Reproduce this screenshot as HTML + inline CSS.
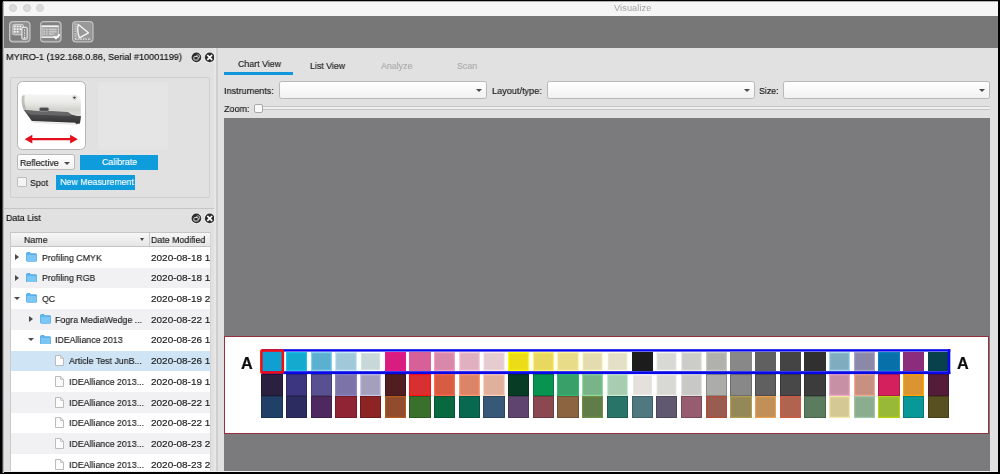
<!DOCTYPE html>
<html><head><meta charset="utf-8"><title>Visualize</title>
<style>
*{box-sizing:border-box;margin:0;padding:0}
html,body{width:1000px;height:474px;overflow:hidden;background:#000}
body{position:relative;font-family:"Liberation Sans",sans-serif;font-size:9px;color:#1a1a1a;-webkit-font-smoothing:antialiased}
.abs,body>div,body>span,body>i,body>svg{position:absolute}
i{display:block;font-style:normal}
#edgeL{left:2px;top:1.5px;width:2px;height:471px;background:linear-gradient(to right,#4a4a4a 0,#4a4a4a 50%,#b8b8b8 50%,#b8b8b8 100%)}
#win{left:3.5px;top:1.5px;width:994.5px;height:470.5px;background:#e1e1e2;overflow:hidden}
#title{left:0;top:0;width:994px;height:14.2px;background:#f6f5f6;position:absolute}
#title span{position:absolute;left:610.5px;top:1.6px;font-size:9.2px;color:#a3a3a3;letter-spacing:0.1px}
.tl{position:absolute;top:2.4px;width:8.4px;height:8.4px;border-radius:50%;background:#dcdbdc;border:0.6px solid #d0cfd0}
#tool{position:absolute;left:0;top:14.2px;width:994px;height:32.3px;background:#777777}
.ti{position:absolute;top:5.3px}
.lbl{position:absolute;white-space:nowrap;line-height:11px}
.lbl,.tr span{will-change:transform;font-size:9.8px;transform:scaleX(0.9);transform-origin:0 50%;-webkit-text-stroke:0.18px currentColor}
.tr span.td{transform:scaleX(1.018)}
.btn span{display:inline-block;will-change:transform;font-size:9.8px;transform:scaleX(0.895);-webkit-text-stroke:0.15px currentColor}
#title span{will-change:transform}
.p{position:absolute}
.big{position:absolute;font-size:16.2px;line-height:17px;font-weight:bold;color:#0c0c0c;will-change:transform;-webkit-text-stroke:0.2px #0c0c0c}
/* left dock */
#dock1{position:absolute;left:0;top:46px;width:212.5px;height:160px;background:#e1e1e2}
.gb{position:absolute;border:1px solid #cfcfcf;border-radius:2px}
.circ{position:absolute;width:9.6px;height:9.6px;border-radius:50%;background:#3a3a3a}
.btn{position:absolute;background:#0f9cdc;color:#fff;text-align:center;white-space:nowrap}
.combo{position:absolute;background:linear-gradient(#ffffff,#f1f1f1);border:1px solid #b8b8b8;border-radius:2.5px}
.combo:after{content:"";position:absolute;right:4.2px;top:6.5px;border:3px solid transparent;border-top:3.6px solid #4a4a4a;border-bottom:0}
/* tree */
#tree{position:absolute;left:6.5px;top:230.5px;width:201px;height:240px;background:#fff;overflow:hidden;border-left:1px solid #c9c9c9;border-right:1px solid #d4d4d4}
#th{position:absolute;left:0;top:0;width:201px;height:15px;background:linear-gradient(#f7f7f7,#e6e6e6);border-top:1px solid #c6c6c6;border-bottom:1px solid #c4c4c4}
#rows{position:absolute;left:-1px;top:15px;width:201px;height:230px}
.tr{position:absolute;left:0;width:201px;height:20.8px}
.tr span{position:absolute;top:4.7px;line-height:11px;white-space:nowrap;color:#222}
.td{left:141px}
.fo{position:absolute;top:4.9px}.do{position:absolute;top:4.8px}
.ac{position:absolute;top:7.1px;border:3.1px solid transparent;border-left:4.3px solid #4a4a4a;border-right:0}
.ao{position:absolute;top:8.7px;border:3.1px solid transparent;border-top:3.8px solid #4a4a4a;border-bottom:0}
</style></head><body>
<i id="edgeL"></i>
<i class="abs" style="left:3px;top:1px;width:995px;height:1px;background:#b2b1b2"></i>
<div id="win">
 <div id="title"><i class="tl" style="left:5.3px"></i><i class="tl" style="left:19.1px"></i><i class="tl" style="left:32.6px"></i><span>Visualize</span></div>
 <div id="tool">
  <svg class="ti" style="left:5.8px" width="21.6" height="21.6" viewBox="0 0 21.6 21.6">
   <rect x="0.65" y="0.65" width="20.3" height="20.3" rx="3.4" fill="#8f8f8f" stroke="#c3c3c3" stroke-width="1.3"/>
   <rect x="2" y="14.2" width="10.4" height="4.9" fill="#7e7e7e"/>
   <rect x="3.9" y="3.4" width="10.6" height="10.4" rx="1.4" fill="#a6a6a6" stroke="#d4d4d4" stroke-width="1"/>
   <g fill="#fbfbfb"><rect x="4.9" y="4.6" width="1.8" height="1.6"/><rect x="7.7" y="4.6" width="1.8" height="1.6"/><rect x="10.5" y="4.6" width="1.8" height="1.6"/><rect x="4.9" y="7.3" width="1.8" height="1.6"/><rect x="7.7" y="7.3" width="1.8" height="1.6"/><rect x="10.5" y="7.3" width="1.8" height="1.6"/><rect x="4.9" y="10" width="1.8" height="1.6"/><rect x="7.7" y="10" width="1.8" height="1.6"/></g>
   <rect x="12.9" y="6.4" width="5.3" height="11.8" rx="1.5" fill="#8b8b8b" stroke="#e6e6e6" stroke-width="1.2"/>
   <path d="M15.55 8.2 L15.55 15.2" stroke="#dcdcdc" stroke-width="0.9" stroke-dasharray="2.2 0.8"/>
   <rect x="14.9" y="15.9" width="1.4" height="1.3" fill="#fff"/>
  </svg>
  <svg class="ti" style="left:36.9px" width="21.6" height="21.6" viewBox="0 0 21.6 21.6">
   <rect x="0.65" y="0.65" width="20.3" height="20.3" rx="3.4" fill="#8f8f8f" stroke="#c3c3c3" stroke-width="1.3"/>
   <rect x="1.6" y="1.7" width="17.2" height="2.9" fill="#808080"/>
   <rect x="1.6" y="16.8" width="17.2" height="2.6" fill="#858585"/>
   <rect x="1.7" y="5.1" width="16.8" height="11" fill="#a4a4a4"/>
   <rect x="1.5" y="4.4" width="17.2" height="1.5" fill="#fcfcfc"/>
   <rect x="1.5" y="15.5" width="17.2" height="1.4" fill="#f4f4f4"/>
   <rect x="18" y="5" width="0.9" height="11" fill="#cfcfcf"/>
   <rect x="1.5" y="5" width="0.9" height="11" fill="#cfcfcf"/>
   <g fill="#c9c9c9"><rect x="3.2" y="7.7" width="1.8" height="1.5"/><rect x="5.9" y="7.7" width="1.8" height="1.5"/><rect x="8.9" y="7.7" width="7.6" height="1.5"/>
   <rect x="3.2" y="10" width="1.8" height="1.5"/><rect x="5.9" y="10" width="1.8" height="1.5"/><rect x="8.9" y="10" width="7.6" height="1.5"/>
   <rect x="3.2" y="12.3" width="1.8" height="1.5"/><rect x="5.9" y="12.3" width="1.8" height="1.5"/><rect x="8.9" y="12.3" width="5" height="1.5"/></g>
   <path d="M14 15.3 L15.9 17.4 L19.8 13.4" fill="none" stroke="#ffffff" stroke-width="1.7"/>
  </svg>
  <svg class="ti" style="left:68.5px" width="21.6" height="21.6" viewBox="0 0 21.6 21.6">
   <rect x="0.65" y="0.65" width="20.3" height="20.3" rx="3.4" fill="#8f8f8f" stroke="#c3c3c3" stroke-width="1.3"/>
   <rect x="3.6" y="2" width="15.6" height="15.8" fill="#999999"/>
   <path d="M3.1 2.4 L3.1 18" stroke="#ececec" stroke-width="0.95" stroke-dasharray="1.5 0.9"/>
   <path d="M3 18.2 L19 18.2" stroke="#e8e8e8" stroke-width="1.2" stroke-dasharray="1.7 0.9"/>
   <path d="M4.7 2.2 L4.7 17" stroke="#bdbdbd" stroke-width="0.8"/>
   <path d="M6.3 3.4 L16.4 11.8 L7.6 16.9 Q4.6 10 6.3 3.4 Z" fill="none" stroke="#f4f4f4" stroke-width="1.35" stroke-linejoin="round"/>
  </svg>
 </div>

 <!-- left dock 1 -->
 <span class="lbl" style="left:2.8px;top:49.8px;color:#111;transform:scaleX(0.932)">MYIRO-1 (192.168.0.86, Serial #10001199)</span>
 <svg class="abs" style="left:186.4px;top:49.3px" width="26.2" height="12.8" viewBox="0 0 26.2 12.8">
  <circle cx="6.4" cy="6.4" r="5.9" fill="#f0f0f0" opacity="0.75"/><circle cx="19.7" cy="6.4" r="5.9" fill="#f0f0f0" opacity="0.75"/>
  <circle cx="6.4" cy="6.4" r="4.85" fill="#2e2e2e"/><circle cx="19.7" cy="6.4" r="4.85" fill="#2e2e2e"/>
  <rect x="6.6" y="4" width="3" height="3" rx="0.6" fill="none" stroke="#bdbdbd" stroke-width="0.9"/>
  <rect x="3.9" y="5.5" width="4.2" height="3.5" rx="0.8" fill="#2e2e2e" stroke="#dadada" stroke-width="1"/>
  <path d="M17.3 4 L22.1 8.8 M22.1 4 L17.3 8.8" stroke="#ffffff" stroke-width="1.75"/>
 </svg>
 <div class="gb" style="left:6.6px;top:75.4px;width:200px;height:121px"></div>
 <i class="abs" style="left:94.5px;top:80.5px;width:70px;height:67.5px;background:#e5e5e6"></i>
 <div class="abs" style="left:13.2px;top:79.3px;width:69px;height:68.8px;background:#fff;border:1px solid #b4b4b4;border-radius:5.5px"></div>
 <svg class="abs" style="left:13.2px;top:79.5px" width="69" height="68.8" viewBox="16.7 81 69 68.8">
  <defs><linearGradient id="dv" x1="0" y1="0" x2="0" y2="1"><stop offset="0" stop-color="#f6f6f4"/><stop offset="0.35" stop-color="#ecece9"/><stop offset="0.7" stop-color="#d2d2ce"/><stop offset="1" stop-color="#dededa"/></linearGradient>
  <linearGradient id="dk" x1="0" y1="0" x2="0" y2="1"><stop offset="0" stop-color="#5a5a5c"/><stop offset="1" stop-color="#303032"/></linearGradient></defs>
  <path d="M30 121.6 L76 123.4 L79 125 L34 123 Z" fill="#e6e6e6"/>
  <path d="M23.2 109.4 L39 110.5 L48.6 110.7 L66 111.4 Q68.5 111.7 71 114 Q74 115.3 80.6 115.7 L80.4 119 L79.6 123.6 L75.6 124 L75.2 122.8 L31.5 121.1 Z" fill="url(#dk)"/>
  <path d="M24 110 L66 111.9 Q68 112.2 70 114 L70 116 L30 114.6 Z" fill="#707072" opacity="0.7"/>
  <path d="M21.9 94.2 L75 94.8 Q80.4 95.1 80.5 100.5 L80.6 116.1 Q74 115.7 71 114.4 Q68.5 112.1 66 111.8 L48.6 111.1 L39 110.9 L23.2 109.8 Q20.7 105 21.2 100 Z" fill="url(#dv)"/>
  <path d="M21.6 96 Q20.6 104 23.4 109.6 L26 109.8 Q23.4 103 24.4 95 Z" fill="#9c9c98" opacity="0.55"/>
  <rect x="39" y="107.5" width="9.6" height="3.8" rx="1.7" fill="#4a4a4c" stroke="#a4a4a2" stroke-width="0.7"/>
  <circle cx="74.2" cy="97.6" r="1.2" fill="#3c3c3a"/><circle cx="74.2" cy="97.6" r="2.1" fill="none" stroke="#cacac6" stroke-width="0.6"/>
  <path d="M30.5 139.2 L71.5 139.2" stroke="#e5101e" stroke-width="2.2"/>
  <path d="M24.3 139.2 L32 134.8 L32 143.6 Z M77.5 139.2 L69.8 134.8 L69.8 143.6 Z" fill="#e5101e"/>
 </svg>
 <div class="combo" style="left:13px;top:152.6px;width:58.8px;height:15.8px"><span class="lbl" style="left:2px;top:1.6px">Reflective</span></div>
 <div class="btn" style="left:76.4px;top:153.3px;width:78.6px;height:14.8px;line-height:14.6px"><span>Calibrate</span></div>
 <i class="abs" style="left:13.5px;top:175.6px;width:9.6px;height:9.8px;background:#f4f4f4;border:1px solid #bdbdbd;border-radius:1px"></i>
 <span class="lbl" style="left:26.6px;top:175.6px">Spot</span>
 <div class="btn" style="left:52.6px;top:173.2px;width:78.8px;height:15px;line-height:14.8px;padding-right:2.6px"><span>New Measurement</span></div>
 <i class="abs" style="left:0;top:206.4px;width:210.5px;height:1px;background:#c6c6c6"></i>

 <!-- data list -->
 <span class="lbl" style="left:2.8px;top:210.4px;color:#111">Data List</span>
 <svg class="abs" style="left:186.4px;top:210px" width="26.2" height="12.8" viewBox="0 0 26.2 12.8">
  <circle cx="6.4" cy="6.4" r="5.9" fill="#f0f0f0" opacity="0.75"/><circle cx="19.7" cy="6.4" r="5.9" fill="#f0f0f0" opacity="0.75"/>
  <circle cx="6.4" cy="6.4" r="4.85" fill="#2e2e2e"/><circle cx="19.7" cy="6.4" r="4.85" fill="#2e2e2e"/>
  <rect x="6.6" y="4" width="3" height="3" rx="0.6" fill="none" stroke="#bdbdbd" stroke-width="0.9"/>
  <rect x="3.9" y="5.5" width="4.2" height="3.5" rx="0.8" fill="#2e2e2e" stroke="#dadada" stroke-width="1"/>
  <path d="M17.3 4 L22.1 8.8 M22.1 4 L17.3 8.8" stroke="#ffffff" stroke-width="1.75"/>
 </svg>
 <div id="tree">
  <div id="th"><span class="lbl" style="left:12.5px;top:1.2px">Name</span><i class="abs" style="left:129.2px;top:5.2px;border:2.7px solid transparent;border-top:3.2px solid #444;border-bottom:0"></i><i class="abs" style="left:138px;top:0;width:1px;height:13px;background:#c8c8c8"></i><span class="lbl" style="left:139.6px;top:1.2px">Date Modified</span></div>
  <div id="rows">
<div class="tr" style="top:0.00px;background:#ffffff"><i class="ac" style="left:4.5px"></i><svg class="fo" style="left:16.3px" width="11.2" height="9.7" viewBox="0 0 12 11" preserveAspectRatio="none"><path d="M0.5 1.6 Q0.5 0.6 1.5 0.6 L4.2 0.6 L5.4 2 L10.6 2 Q11.5 2 11.5 3 L11.5 9.6 Q11.5 10.5 10.6 10.5 L1.4 10.5 Q0.5 10.5 0.5 9.6 Z" fill="#5db5ee" stroke="#3d9ee0" stroke-width="0.8"/><path d="M0.9 3.4 L11.1 3.4 L11.1 9.6 Q11.1 10.1 10.6 10.1 L1.4 10.1 Q0.9 10.1 0.9 9.6 Z" fill="#7cc6f5"/></svg><span class="tn" style="left:31.8px">Profiling CMYK</span><span class="td">2020-08-18 1</span></div>
<div class="tr" style="top:20.70px;background:#f1f1f3"><i class="ac" style="left:4.5px"></i><svg class="fo" style="left:16.3px" width="11.2" height="9.7" viewBox="0 0 12 11" preserveAspectRatio="none"><path d="M0.5 1.6 Q0.5 0.6 1.5 0.6 L4.2 0.6 L5.4 2 L10.6 2 Q11.5 2 11.5 3 L11.5 9.6 Q11.5 10.5 10.6 10.5 L1.4 10.5 Q0.5 10.5 0.5 9.6 Z" fill="#5db5ee" stroke="#3d9ee0" stroke-width="0.8"/><path d="M0.9 3.4 L11.1 3.4 L11.1 9.6 Q11.1 10.1 10.6 10.1 L1.4 10.1 Q0.9 10.1 0.9 9.6 Z" fill="#7cc6f5"/></svg><span class="tn" style="left:31.8px">Profiling RGB</span><span class="td">2020-08-18 1</span></div>
<div class="tr" style="top:41.40px;background:#ffffff"><i class="ao" style="left:3.6px"></i><svg class="fo" style="left:16.3px" width="11.2" height="9.7" viewBox="0 0 12 11" preserveAspectRatio="none"><path d="M0.5 1.6 Q0.5 0.6 1.5 0.6 L4.2 0.6 L5.4 2 L10.6 2 Q11.5 2 11.5 3 L11.5 9.6 Q11.5 10.5 10.6 10.5 L1.4 10.5 Q0.5 10.5 0.5 9.6 Z" fill="#5db5ee" stroke="#3d9ee0" stroke-width="0.8"/><path d="M0.9 3.4 L11.1 3.4 L11.1 9.6 Q11.1 10.1 10.6 10.1 L1.4 10.1 Q0.9 10.1 0.9 9.6 Z" fill="#7cc6f5"/></svg><span class="tn" style="left:31.8px">QC</span><span class="td">2020-08-19 2</span></div>
<div class="tr" style="top:62.10px;background:#f1f1f3"><i class="ac" style="left:18.7px"></i><svg class="fo" style="left:30.2px" width="11.2" height="9.7" viewBox="0 0 12 11" preserveAspectRatio="none"><path d="M0.5 1.6 Q0.5 0.6 1.5 0.6 L4.2 0.6 L5.4 2 L10.6 2 Q11.5 2 11.5 3 L11.5 9.6 Q11.5 10.5 10.6 10.5 L1.4 10.5 Q0.5 10.5 0.5 9.6 Z" fill="#5db5ee" stroke="#3d9ee0" stroke-width="0.8"/><path d="M0.9 3.4 L11.1 3.4 L11.1 9.6 Q11.1 10.1 10.6 10.1 L1.4 10.1 Q0.9 10.1 0.9 9.6 Z" fill="#7cc6f5"/></svg><span class="tn" style="left:45.4px">Fogra MediaWedge ...</span><span class="td">2020-08-22 1</span></div>
<div class="tr" style="top:82.80px;background:#ffffff"><i class="ao" style="left:17.8px"></i><svg class="fo" style="left:30.2px" width="11.2" height="9.7" viewBox="0 0 12 11" preserveAspectRatio="none"><path d="M0.5 1.6 Q0.5 0.6 1.5 0.6 L4.2 0.6 L5.4 2 L10.6 2 Q11.5 2 11.5 3 L11.5 9.6 Q11.5 10.5 10.6 10.5 L1.4 10.5 Q0.5 10.5 0.5 9.6 Z" fill="#5db5ee" stroke="#3d9ee0" stroke-width="0.8"/><path d="M0.9 3.4 L11.1 3.4 L11.1 9.6 Q11.1 10.1 10.6 10.1 L1.4 10.1 Q0.9 10.1 0.9 9.6 Z" fill="#7cc6f5"/></svg><span class="tn" style="left:45.4px">IDEAlliance 2013</span><span class="td">2020-08-26 1</span></div>
<div class="tr" style="top:103.50px;background:#cfe5f5"><svg class="do" style="left:45.3px" width="9" height="11" viewBox="0 0 9 11"><path d="M0.5 0.5 L5.6 0.5 L8.5 3.4 L8.5 10.5 L0.5 10.5 Z" fill="#fdfdfd" stroke="#b4b4b4" stroke-width="0.9"/><path d="M5.6 0.5 L5.6 3.4 L8.5 3.4" fill="none" stroke="#b4b4b4" stroke-width="0.8"/></svg><span class="tn" style="left:59.3px">Article Test JunB...</span><span class="td">2020-08-26 1</span></div>
<div class="tr" style="top:124.20px;background:#ffffff"><svg class="do" style="left:45.3px" width="9" height="11" viewBox="0 0 9 11"><path d="M0.5 0.5 L5.6 0.5 L8.5 3.4 L8.5 10.5 L0.5 10.5 Z" fill="#fdfdfd" stroke="#b4b4b4" stroke-width="0.9"/><path d="M5.6 0.5 L5.6 3.4 L8.5 3.4" fill="none" stroke="#b4b4b4" stroke-width="0.8"/></svg><span class="tn" style="left:59.3px">IDEAlliance 2013...</span><span class="td">2020-08-19 1</span></div>
<div class="tr" style="top:144.90px;background:#f1f1f3"><svg class="do" style="left:45.3px" width="9" height="11" viewBox="0 0 9 11"><path d="M0.5 0.5 L5.6 0.5 L8.5 3.4 L8.5 10.5 L0.5 10.5 Z" fill="#fdfdfd" stroke="#b4b4b4" stroke-width="0.9"/><path d="M5.6 0.5 L5.6 3.4 L8.5 3.4" fill="none" stroke="#b4b4b4" stroke-width="0.8"/></svg><span class="tn" style="left:59.3px">IDEAlliance 2013...</span><span class="td">2020-08-22 1</span></div>
<div class="tr" style="top:165.60px;background:#ffffff"><svg class="do" style="left:45.3px" width="9" height="11" viewBox="0 0 9 11"><path d="M0.5 0.5 L5.6 0.5 L8.5 3.4 L8.5 10.5 L0.5 10.5 Z" fill="#fdfdfd" stroke="#b4b4b4" stroke-width="0.9"/><path d="M5.6 0.5 L5.6 3.4 L8.5 3.4" fill="none" stroke="#b4b4b4" stroke-width="0.8"/></svg><span class="tn" style="left:59.3px">IDEAlliance 2013...</span><span class="td">2020-08-22 1</span></div>
<div class="tr" style="top:186.30px;background:#f1f1f3"><svg class="do" style="left:45.3px" width="9" height="11" viewBox="0 0 9 11"><path d="M0.5 0.5 L5.6 0.5 L8.5 3.4 L8.5 10.5 L0.5 10.5 Z" fill="#fdfdfd" stroke="#b4b4b4" stroke-width="0.9"/><path d="M5.6 0.5 L5.6 3.4 L8.5 3.4" fill="none" stroke="#b4b4b4" stroke-width="0.8"/></svg><span class="tn" style="left:59.3px">IDEAlliance 2013...</span><span class="td">2020-08-23 2</span></div>
<div class="tr" style="top:207.00px;background:#ffffff"><svg class="do" style="left:45.3px" width="9" height="11" viewBox="0 0 9 11"><path d="M0.5 0.5 L5.6 0.5 L8.5 3.4 L8.5 10.5 L0.5 10.5 Z" fill="#fdfdfd" stroke="#b4b4b4" stroke-width="0.9"/><path d="M5.6 0.5 L5.6 3.4 L8.5 3.4" fill="none" stroke="#b4b4b4" stroke-width="0.8"/></svg><span class="tn" style="left:59.3px">IDEAlliance 2013...</span><span class="td">2020-08-23 2</span></div>
  </div>
 </div>

 <!-- splitter -->
 <i class="abs" style="left:210.5px;top:46px;width:2px;height:425px;background:#e7e7e8"></i>
 <i class="abs" style="left:212.5px;top:46px;width:2px;height:425px;background:#cfcfd0"></i>

 <!-- right panel -->
 <span class="lbl" style="left:234.7px;top:56.6px;color:#222">Chart View</span>
 <i class="abs" style="left:220.5px;top:70.5px;width:69.2px;height:2.8px;background:#1297dc"></i>
 <span class="lbl" style="left:306.5px;top:58.6px;color:#222">List View</span>
 <span class="lbl" style="left:377.3px;top:58.6px;color:#ababab">Analyze</span>
 <span class="lbl" style="left:453.3px;top:58.6px;color:#ababab">Scan</span>

 <span class="lbl" style="left:220.8px;top:83.4px;transform:scaleX(0.925)">Instruments:</span>
 <div class="combo" style="left:275.7px;top:79.8px;width:207.8px;height:17.6px"></div>
 <span class="lbl" style="left:488.5px;top:83.4px;transform:scaleX(0.932)">Layout/type:</span>
 <div class="combo" style="left:543.7px;top:79.8px;width:207.8px;height:17.6px"></div>
 <span class="lbl" style="left:755.7px;top:83.4px">Size:</span>
 <div class="combo" style="left:779.3px;top:79.8px;width:207.6px;height:17.6px"></div>
 <span class="lbl" style="left:220.8px;top:101.6px;transform:scaleX(0.915)">Zoom:</span>
 <i class="abs" style="left:256px;top:104.8px;width:731px;height:3.4px;background:#f0f0f0;border:1px solid #c6c6c6;border-radius:1.7px"></i>
 <i class="abs" style="left:250.8px;top:102.2px;width:9.2px;height:9.4px;background:#fafafa;border:1px solid #a8a8a8;border-radius:2px"></i>

 <div class="abs" style="left:220.5px;top:116.5px;width:766.5px;height:353px;background:#7b7b7d"></div>
 <div class="abs" style="left:220.5px;top:334.5px;width:765px;height:97.5px;background:#fff;border:1px solid #96303f"></div>
 <i class="abs" style="left:986.8px;top:46px;width:8px;height:425px;background:#e1e1e2"></i>
 <i class="abs" style="left:0;top:469.5px;width:994px;height:1px;background:#efefef"></i>
</div>

<!-- chart contents in page coordinates -->
<span class="big" style="left:241.2px;top:355.4px">A</span>
<span class="big" style="left:956.8px;top:355.4px">A</span>
<i class="p" style="left:261.30px;top:351.6px;width:21.3px;height:19.8px;background:#0f9fd0;"></i>
<i class="p" style="left:285.98px;top:351.6px;width:21.3px;height:19.8px;background:#14a9cf;box-shadow:inset 0 0 0 1.2px #1cc0ec;"></i>
<i class="p" style="left:310.66px;top:351.6px;width:21.3px;height:19.8px;background:#5cb0cf;box-shadow:inset 0 0 0 1.2px #84d0f0;"></i>
<i class="p" style="left:335.34px;top:351.6px;width:21.3px;height:19.8px;background:#a0c8d8;box-shadow:inset 0 0 0 1.2px #c4e8f8;"></i>
<i class="p" style="left:360.02px;top:351.6px;width:21.3px;height:19.8px;background:#c8d8d8;box-shadow:inset 0 0 0 1.2px #f4fcfc;"></i>
<i class="p" style="left:384.70px;top:351.6px;width:21.3px;height:19.8px;background:#d81c80;box-shadow:inset 0 0 0 1.2px #e81890;"></i>
<i class="p" style="left:409.38px;top:351.6px;width:21.3px;height:19.8px;background:#d86098;"></i>
<i class="p" style="left:434.06px;top:351.6px;width:21.3px;height:19.8px;background:#d888a8;box-shadow:inset 0 0 0 1.2px #f0a0c0;"></i>
<i class="p" style="left:458.74px;top:351.6px;width:21.3px;height:19.8px;background:#e0b0c0;box-shadow:inset 0 0 0 1.2px #f4d0dc;"></i>
<i class="p" style="left:483.42px;top:351.6px;width:21.3px;height:19.8px;background:#e4ccd0;box-shadow:inset 0 0 0 1.2px #fce8ec;"></i>
<i class="p" style="left:508.10px;top:351.6px;width:21.3px;height:19.8px;background:#ecdc18;box-shadow:inset 0 0 0 1.2px #ffff00;"></i>
<i class="p" style="left:532.78px;top:351.6px;width:21.3px;height:19.8px;background:#e8d860;box-shadow:inset 0 0 0 1.2px #fff070;"></i>
<i class="p" style="left:557.46px;top:351.6px;width:21.3px;height:19.8px;background:#e8dc88;box-shadow:inset 0 0 0 1.2px #fff4a0;"></i>
<i class="p" style="left:582.14px;top:351.6px;width:21.3px;height:19.8px;background:#e4dcb0;box-shadow:inset 0 0 0 1.2px #fffac8;"></i>
<i class="p" style="left:606.82px;top:351.6px;width:21.3px;height:19.8px;background:#e4e0c8;box-shadow:inset 0 0 0 1.2px #fffce0;"></i>
<i class="p" style="left:631.50px;top:351.6px;width:21.3px;height:19.8px;background:#1c1c1c;"></i>
<i class="p" style="left:656.18px;top:351.6px;width:21.3px;height:19.8px;background:#d8d8d4;box-shadow:inset 0 0 0 1.2px #f4f4f0;"></i>
<i class="p" style="left:680.86px;top:351.6px;width:21.3px;height:19.8px;background:#ccccc8;box-shadow:inset 0 0 0 1.2px #e8e8e0;"></i>
<i class="p" style="left:705.54px;top:351.6px;width:21.3px;height:19.8px;background:#b0b0ac;box-shadow:inset 0 0 0 1.2px #c8c8c0;"></i>
<i class="p" style="left:730.22px;top:351.6px;width:21.3px;height:19.8px;background:#888888;"></i>
<i class="p" style="left:754.90px;top:351.6px;width:21.3px;height:19.8px;background:#606060;"></i>
<i class="p" style="left:779.58px;top:351.6px;width:21.3px;height:19.8px;background:#444444;"></i>
<i class="p" style="left:804.26px;top:351.6px;width:21.3px;height:19.8px;background:#303030;"></i>
<i class="p" style="left:828.94px;top:351.6px;width:21.3px;height:19.8px;background:#80acc0;box-shadow:inset 0 0 0 1.2px #a8d8ec;"></i>
<i class="p" style="left:853.62px;top:351.6px;width:21.3px;height:19.8px;background:#8c88a8;box-shadow:inset 0 0 0 1.2px #a8a4c4;"></i>
<i class="p" style="left:878.30px;top:351.6px;width:21.3px;height:19.8px;background:#0870a8;box-shadow:inset 0 0 0 1.2px #0880c0;"></i>
<i class="p" style="left:902.98px;top:351.6px;width:21.3px;height:19.8px;background:#8c2c7c;"></i>
<i class="p" style="left:927.66px;top:351.6px;width:21.3px;height:19.8px;background:#08404c;"></i>
<i class="p" style="left:261.30px;top:373.6px;width:21.3px;height:22.2px;background:#2a2040;box-shadow:inset 0 0 0 1px rgba(0,0,0,0.2);"></i>
<i class="p" style="left:285.98px;top:373.6px;width:21.3px;height:22.2px;background:#3c3680;box-shadow:inset 0 0 0 1px rgba(0,0,0,0.2);"></i>
<i class="p" style="left:310.66px;top:373.6px;width:21.3px;height:22.2px;background:#585090;box-shadow:inset 0 0 0 1px rgba(0,0,0,0.2);"></i>
<i class="p" style="left:335.34px;top:373.6px;width:21.3px;height:22.2px;background:#7c74a8;box-shadow:inset 0 0 0 1.2px #8c84c0;"></i>
<i class="p" style="left:360.02px;top:373.6px;width:21.3px;height:22.2px;background:#a4a0bc;box-shadow:inset 0 0 0 1.2px #c8c4e8;"></i>
<i class="p" style="left:384.70px;top:373.6px;width:21.3px;height:22.2px;background:#501e20;box-shadow:inset 0 0 0 1px rgba(0,0,0,0.2);"></i>
<i class="p" style="left:409.38px;top:373.6px;width:21.3px;height:22.2px;background:#d83030;box-shadow:inset 0 0 0 1.2px #ff1010;"></i>
<i class="p" style="left:434.06px;top:373.6px;width:21.3px;height:22.2px;background:#d85c44;box-shadow:inset 0 0 0 1.2px #ff6848;"></i>
<i class="p" style="left:458.74px;top:373.6px;width:21.3px;height:22.2px;background:#dc8468;box-shadow:inset 0 0 0 1.2px #ff9c78;"></i>
<i class="p" style="left:483.42px;top:373.6px;width:21.3px;height:22.2px;background:#e0b09c;box-shadow:inset 0 0 0 1.2px #ffd0b8;"></i>
<i class="p" style="left:508.10px;top:373.6px;width:21.3px;height:22.2px;background:#083c24;box-shadow:inset 0 0 0 1px rgba(0,0,0,0.2);"></i>
<i class="p" style="left:532.78px;top:373.6px;width:21.3px;height:22.2px;background:#089450;box-shadow:inset 0 0 0 1px rgba(0,0,0,0.2);"></i>
<i class="p" style="left:557.46px;top:373.6px;width:21.3px;height:22.2px;background:#38a068;box-shadow:inset 0 0 0 1.2px #30b870;"></i>
<i class="p" style="left:582.14px;top:373.6px;width:21.3px;height:22.2px;background:#78b488;box-shadow:inset 0 0 0 1.2px #90d8a0;"></i>
<i class="p" style="left:606.82px;top:373.6px;width:21.3px;height:22.2px;background:#a8ccb0;box-shadow:inset 0 0 0 1.2px #c8ecd0;"></i>
<i class="p" style="left:631.50px;top:373.6px;width:21.3px;height:22.2px;background:#e4e0dc;box-shadow:inset 0 0 0 1.2px #ffffff;"></i>
<i class="p" style="left:656.18px;top:373.6px;width:21.3px;height:22.2px;background:#d8d8d4;box-shadow:inset 0 0 0 1.2px #f4f4f0;"></i>
<i class="p" style="left:680.86px;top:373.6px;width:21.3px;height:22.2px;background:#c8c8c4;box-shadow:inset 0 0 0 1.2px #e0e0dc;"></i>
<i class="p" style="left:705.54px;top:373.6px;width:21.3px;height:22.2px;background:#acaca8;box-shadow:inset 0 0 0 1px rgba(0,0,0,0.2);"></i>
<i class="p" style="left:730.22px;top:373.6px;width:21.3px;height:22.2px;background:#888888;box-shadow:inset 0 0 0 1px rgba(0,0,0,0.2);"></i>
<i class="p" style="left:754.90px;top:373.6px;width:21.3px;height:22.2px;background:#606060;box-shadow:inset 0 0 0 1px rgba(0,0,0,0.2);"></i>
<i class="p" style="left:779.58px;top:373.6px;width:21.3px;height:22.2px;background:#484848;box-shadow:inset 0 0 0 1px rgba(0,0,0,0.2);"></i>
<i class="p" style="left:804.26px;top:373.6px;width:21.3px;height:22.2px;background:#3c3c3c;box-shadow:inset 0 0 0 1px rgba(0,0,0,0.2);"></i>
<i class="p" style="left:828.94px;top:373.6px;width:21.3px;height:22.2px;background:#c890a4;box-shadow:inset 0 0 0 1.2px #f0a8c8;"></i>
<i class="p" style="left:853.62px;top:373.6px;width:21.3px;height:22.2px;background:#c89080;box-shadow:inset 0 0 0 1.2px #f0a890;"></i>
<i class="p" style="left:878.30px;top:373.6px;width:21.3px;height:22.2px;background:#d4205c;box-shadow:inset 0 0 0 1px rgba(0,0,0,0.2);"></i>
<i class="p" style="left:902.98px;top:373.6px;width:21.3px;height:22.2px;background:#dc9430;box-shadow:inset 0 0 0 1.2px #ffa500;"></i>
<i class="p" style="left:927.66px;top:373.6px;width:21.3px;height:22.2px;background:#541c38;box-shadow:inset 0 0 0 1px rgba(0,0,0,0.2);"></i>
<i class="p" style="left:261.30px;top:395.8px;width:21.3px;height:22.1px;background:#204068;box-shadow:inset 0 0 0 1px rgba(0,0,0,0.2);"></i>
<i class="p" style="left:285.98px;top:395.8px;width:21.3px;height:22.1px;background:#2c2c60;box-shadow:inset 0 0 0 1px rgba(0,0,0,0.2);"></i>
<i class="p" style="left:310.66px;top:395.8px;width:21.3px;height:22.1px;background:#502860;box-shadow:inset 0 0 0 1px rgba(0,0,0,0.2);"></i>
<i class="p" style="left:335.34px;top:395.8px;width:21.3px;height:22.1px;background:#902434;box-shadow:inset 0 0 0 1px rgba(0,0,0,0.2);"></i>
<i class="p" style="left:360.02px;top:395.8px;width:21.3px;height:22.1px;background:#8c2424;box-shadow:inset 0 0 0 1px rgba(0,0,0,0.2);"></i>
<i class="p" style="left:384.70px;top:395.8px;width:21.3px;height:22.1px;background:#904c2c;box-shadow:inset 0 0 0 1.2px #b05c1c;"></i>
<i class="p" style="left:409.38px;top:395.8px;width:21.3px;height:22.1px;background:#38702c;box-shadow:inset 0 0 0 1px rgba(0,0,0,0.2);"></i>
<i class="p" style="left:434.06px;top:395.8px;width:21.3px;height:22.1px;background:#086840;box-shadow:inset 0 0 0 1px rgba(0,0,0,0.2);"></i>
<i class="p" style="left:458.74px;top:395.8px;width:21.3px;height:22.1px;background:#086850;box-shadow:inset 0 0 0 1px rgba(0,0,0,0.2);"></i>
<i class="p" style="left:483.42px;top:395.8px;width:21.3px;height:22.1px;background:#385878;box-shadow:inset 0 0 0 1px rgba(0,0,0,0.2);"></i>
<i class="p" style="left:508.10px;top:395.8px;width:21.3px;height:22.1px;background:#604470;box-shadow:inset 0 0 0 1px rgba(0,0,0,0.2);"></i>
<i class="p" style="left:532.78px;top:395.8px;width:21.3px;height:22.1px;background:#8c4850;box-shadow:inset 0 0 0 1px rgba(0,0,0,0.2);"></i>
<i class="p" style="left:557.46px;top:395.8px;width:21.3px;height:22.1px;background:#8c6440;box-shadow:inset 0 0 0 1px rgba(0,0,0,0.2);"></i>
<i class="p" style="left:582.14px;top:395.8px;width:21.3px;height:22.1px;background:#607c48;box-shadow:inset 0 0 0 1.2px #708c40;"></i>
<i class="p" style="left:606.82px;top:395.8px;width:21.3px;height:22.1px;background:#287468;box-shadow:inset 0 0 0 1px rgba(0,0,0,0.2);"></i>
<i class="p" style="left:631.50px;top:395.8px;width:21.3px;height:22.1px;background:#507880;box-shadow:inset 0 0 0 1px rgba(0,0,0,0.2);"></i>
<i class="p" style="left:656.18px;top:395.8px;width:21.3px;height:22.1px;background:#605870;box-shadow:inset 0 0 0 1px rgba(0,0,0,0.2);"></i>
<i class="p" style="left:680.86px;top:395.8px;width:21.3px;height:22.1px;background:#985c70;box-shadow:inset 0 0 0 1px rgba(0,0,0,0.2);"></i>
<i class="p" style="left:705.54px;top:395.8px;width:21.3px;height:22.1px;background:#985c50;box-shadow:inset 0 0 0 1.2px #b04c38;"></i>
<i class="p" style="left:730.22px;top:395.8px;width:21.3px;height:22.1px;background:#948858;box-shadow:inset 0 0 0 1.2px #b09c50;"></i>
<i class="p" style="left:754.90px;top:395.8px;width:21.3px;height:22.1px;background:#c09058;box-shadow:inset 0 0 0 1.2px #e8a050;"></i>
<i class="p" style="left:779.58px;top:395.8px;width:21.3px;height:22.1px;background:#b06450;box-shadow:inset 0 0 0 1.2px #d05840;"></i>
<i class="p" style="left:804.26px;top:395.8px;width:21.3px;height:22.1px;background:#5c7c60;box-shadow:inset 0 0 0 1px rgba(0,0,0,0.2);"></i>
<i class="p" style="left:828.94px;top:395.8px;width:21.3px;height:22.1px;background:#d4c894;box-shadow:inset 0 0 0 1.2px #f4e8a8;"></i>
<i class="p" style="left:853.62px;top:395.8px;width:21.3px;height:22.1px;background:#8cac90;box-shadow:inset 0 0 0 1.2px #a0c4a4;"></i>
<i class="p" style="left:878.30px;top:395.8px;width:21.3px;height:22.1px;background:#98b838;box-shadow:inset 0 0 0 1.2px #b8d010;"></i>
<i class="p" style="left:902.98px;top:395.8px;width:21.3px;height:22.1px;background:#089898;box-shadow:inset 0 0 0 1px rgba(0,0,0,0.2);"></i>
<i class="p" style="left:927.66px;top:395.8px;width:21.3px;height:22.1px;background:#585020;box-shadow:inset 0 0 0 1px rgba(0,0,0,0.2);"></i>
<svg class="abs" style="left:0;top:0" width="1000" height="474" viewBox="0 0 1000 474">
 <rect x="262" y="349.2" width="688.3" height="2.4" fill="#0808e8"/>
 <rect x="262" y="371.2" width="688.3" height="2.9" fill="#0808e8"/>
 <rect x="947.7" y="349.2" width="2.6" height="24.9" fill="#0808e8"/>
 <rect x="261.35" y="350.55" width="21.5" height="22" fill="none" stroke="#f40c0c" stroke-width="2.5" rx="0.6"/>
</svg>
</body></html>
